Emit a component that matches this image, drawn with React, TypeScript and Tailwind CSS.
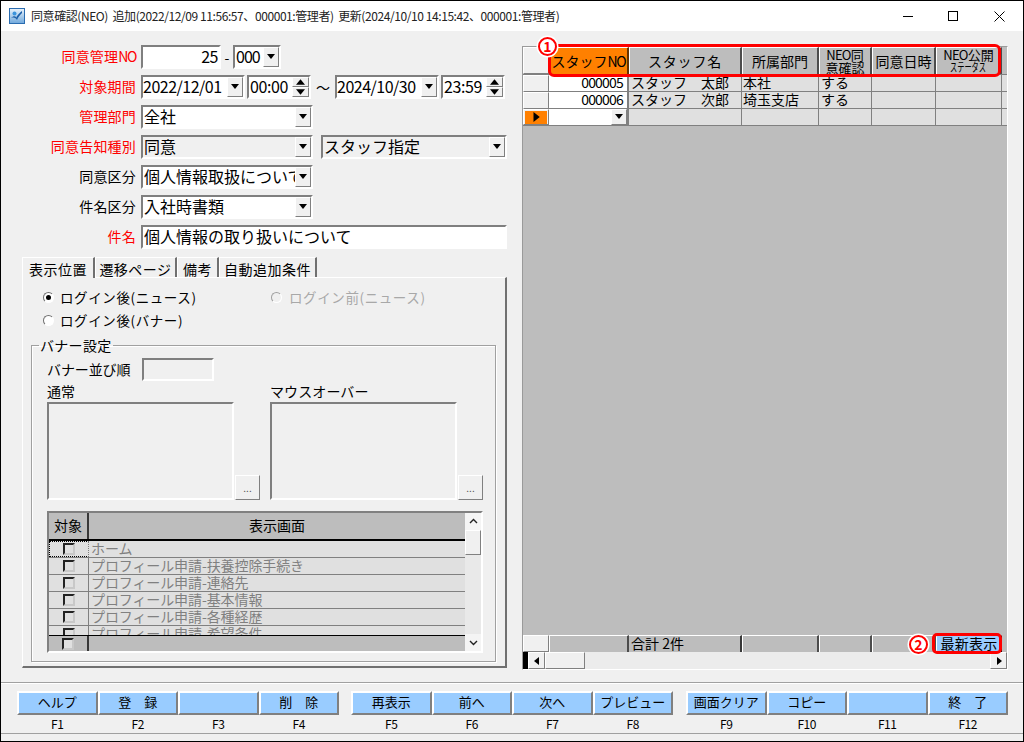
import React from "react";

const raised = "border border-t-white border-l-white border-r-[#808080] border-b-[#808080]";
const sunken = "border-2 border-t-[#7f7f7f] border-l-[#7f7f7f] border-r-white border-b-white";

function Arrow({ dir = "down", size = 8 }: { dir?: "down" | "up" | "left" | "right"; size?: number }) {
  const pts = { down: "0,1 8,1 4,6", up: "4,1 8,6 0,6", left: "6,0 6,8 1,4", right: "2,0 2,8 7,4" }[dir];
  return (
    <svg width={size} height={size} viewBox="0 0 8 8" className="block">
      <polygon points={pts} fill="#000" />
    </svg>
  );
}

function DropBtn({ w = "w-[16px]" }: { w?: string }) {
  return (
    <div className={`${w} shrink-0 h-full bg-[#f0f0f0] flex items-center justify-center ${raised}`}>
      <Arrow />
    </div>
  );
}

function Spin() {
  return (
    <div className="w-[17px] shrink-0 h-full flex flex-col">
      <div className={`h-1/2 bg-[#f0f0f0] flex items-center justify-center ${raised}`}>
        <Arrow dir="up" size={9} />
      </div>
      <div className={`h-1/2 bg-[#f0f0f0] flex items-center justify-center ${raised}`}>
        <Arrow dir="down" size={9} />
      </div>
    </div>
  );
}

function Label({ children, red }: { children: React.ReactNode; red?: boolean }) {
  return (
    <div className={`w-[114px] mr-[5px] text-right text-[14px] tracking-[0.2px] leading-[22px] h-[24px] whitespace-nowrap shrink-0 ${red ? "text-[#ff0000]" : "text-black"}`}>
      {children}
    </div>
  );
}

function Select({ text, w, bg = "bg-white" }: { text: string; w: string; bg?: string }) {
  return (
    <div className={`${w} h-[24px] ${bg} ${sunken} flex items-stretch shrink-0`}>
      <div className="flex-1 overflow-hidden whitespace-nowrap pl-[1px] text-[16px] leading-[18px]">{text}</div>
      <DropBtn />
    </div>
  );
}

function Row({ children, mb = "mb-[6px]" }: { children: React.ReactNode; mb?: string }) {
  return <div className={`flex items-center h-[24px] ${mb}`}>{children}</div>;
}

function Tab({ text, w, active }: { text: string; w: string; active?: boolean }) {
  return (
    <div
      className={`${w} h-[20px] shrink-0 text-center text-[14px] tracking-[0.5px] leading-[22px] whitespace-nowrap border-r-2 border-r-[#707070] border-t border-t-white ${
        active ? "border-l border-l-white h-[21px] -mb-px relative bg-[#f0f0f0]" : "mt-[1px] border-l border-l-white"
      }`}
    >
      {text}
    </div>
  );
}

function Radio({ checked, disabled }: { checked?: boolean; disabled?: boolean }) {
  return (
    <div className={`w-[11px] h-[11px] rounded-full border border-t-[#707070] border-l-[#707070] border-r-white border-b-white flex items-center justify-center shrink-0 ${disabled ? "bg-[#f0f0f0] border-t-[#a0a0a0] border-l-[#a0a0a0]" : "bg-white"}`}>
      {checked && <div className="w-[5px] h-[5px] rounded-full bg-black" />}
    </div>
  );
}

function Check() {
  return <div className="w-[12px] h-[12px] border-2 border-t-[#222] border-l-[#222] border-r-[#c8c8c8] border-b-[#c8c8c8] bg-[#e0e0e0]" />;
}

const listRows = [
  "ホーム",
  "プロフィール申請-扶養控除手続き",
  "プロフィール申請-連絡先",
  "プロフィール申請-基本情報",
  "プロフィール申請-各種経歴",
  "プロフィール申請-希望条件",
];

function ImageBox({ label, ml }: { label: string; ml?: string }) {
  return (
    <div className={`${ml ?? ""} w-[213px] shrink-0`}>
      <div className="h-[21px] text-[14px] leading-[20px] tracking-[0.1px]">{label}</div>
      <div className="flex items-end">
        <div className={`w-[187px] h-[98px] ${sunken}`} />
        <div className={`ml-[1px] w-[25px] h-[25px] bg-[#f0f0f0] ${raised} text-[10px] text-[#555] text-center leading-[24px]`}>...</div>
      </div>
    </div>
  );
}

const staffCols = "grid-cols-[26px_80px_113px_77px_53px_64px_66px_5px]";

function HeadCell({ children, active }: { children?: React.ReactNode; active?: boolean }) {
  return (
    <div className={`h-full overflow-hidden flex flex-col items-center justify-center text-center text-[14px] leading-[14px] pb-[1px] border-r-2 border-r-black/60 border-t border-t-white border-l border-l-white ${active ? "bg-[#ff8000]" : "bg-[#bdbdbd]"}`}>
      {children}
    </div>
  );
}

function DataRow({ no, name, dept, neo }: { no: string; name: string; dept: string; neo: string }) {
  return (
    <div className={`grid ${staffCols} h-[17px] text-[14px] leading-[15px] whitespace-nowrap`}>
      <div className={`bg-[#f0f0f0] ${raised} border-r-[#404040]`} />
      <div className="bg-white text-right pr-[4px] border-b border-b-[#808080] border-r-2 border-r-[#808080] tracking-[-0.8px]">{no}</div>
      <div className="bg-[#e0e0e0] pl-[2px] border-b border-b-[#808080] border-r border-r-[#808080] overflow-hidden">{name}</div>
      <div className="bg-[#e0e0e0] pl-[1px] border-b border-b-[#808080] border-r border-r-[#808080] overflow-hidden">{dept}</div>
      <div className="bg-[#e0e0e0] pl-[2px] border-b border-b-[#808080] border-r border-r-[#808080]">{neo}</div>
      <div className="bg-[#e0e0e0] border-b border-b-[#808080] border-r border-r-[#808080]" />
      <div className="bg-[#e0e0e0] border-b border-b-[#808080] border-r border-r-[#808080]" />
      <div className="bg-[#e0e0e0] border-b border-b-[#808080]" />
    </div>
  );
}

function FnBtn({ text, fn, w = "w-[80.5px]" }: { text: string; fn: string; w?: string }) {
  return (
    <div className={`${w} shrink-0`}>
      <div className={`h-[24px] bg-[#99ccff] border-2 border-t-white border-l-white border-r-[#808080] border-b-[#808080] text-center text-[13px] leading-[18px] whitespace-pre`}>
        {text}
      </div>
      <div className="h-[18px] text-center text-[12px] leading-[18px] tracking-[-0.4px]">{fn}</div>
    </div>
  );
}

function Circle({ n, className }: { n: string; className: string }) {
  return (
    <div className={`absolute w-[19px] h-[19px] rounded-full bg-white border-2 border-[#ff0000] shadow-[0_0_0_1.5px_white] text-[#ff0000] font-bold text-[14px] leading-[14px] text-center ${className}`}>
      {n}
    </div>
  );
}

export default function App() {
  return (
    <div className="relative w-[1024px] h-[742px] overflow-hidden bg-[#f0f0f0] border border-black text-black [font-family:'Noto_Sans_CJK_JP',sans-serif]">
      {/* title bar */}
      <div className="h-[30px] bg-white flex items-center">
        <svg width="16" height="16" viewBox="0 0 16 16" className="ml-[8px] shrink-0">
          <defs>
            <linearGradient id="ic" x1="0" y1="0" x2="0" y2="1">
              <stop offset="0" stopColor="#eaf3fb" />
              <stop offset="1" stopColor="#6fa8dc" />
            </linearGradient>
          </defs>
          <rect x="0.5" y="0.5" width="15" height="15" fill="url(#ic)" stroke="#2a6cb0" />
          <path d="M2 10c2-2 4-2 5-1l0 1c1-2 3-5 6-7l0 2c-2 2-4 4-5 7-1-2-3-3-6-2z" fill="#1a5ea8" />
          <circle cx="5.5" cy="5.5" r="2" fill="#3b94dc" />
        </svg>
        <div className="ml-[6px] text-[12px] text-[#222] whitespace-pre tracking-[-0.42px]">
          同意確認(NEO)  追加(2022/12/09 11:56:57、000001:管理者)  更新(2024/10/10 14:15:42、000001:管理者)
        </div>
        <div className="ml-auto flex items-center">
          <div className="w-[10px] h-px bg-black mr-[35px]" />
          <div className="w-[10px] h-[10px] border border-black mr-[36px]" />
          <svg width="11" height="11" viewBox="0 0 11 11" className="mr-[18px]">
            <path d="M0.5 0.5L10.5 10.5M10.5 0.5L0.5 10.5" stroke="#000" strokeWidth="1" />
          </svg>
        </div>
      </div>

      {/* main */}
      <div className="h-[651px] flex">
        <div className="w-[521px] shrink-0 pl-[21px] pt-[14px]">
          <Row>
            <Label red>同意管理<span className="tracking-[-1.4px]">NO</span></Label>
            <div className={`w-[80px] h-[24px] bg-white ${sunken} text-right pr-[1px] text-[16px] leading-[18px] tracking-[-0.5px]`}>25</div>
            <div className="w-[12px] text-center text-[14px]">-</div>
            <div className={`w-[48px] h-[24px] bg-white ${sunken} flex`}>
              <div className="flex-1 text-[16px] leading-[18px] tracking-[-1px] pl-[1px]">000</div>
              <DropBtn />
            </div>
          </Row>
          <Row>
            <Label red>対象期間</Label>
            <div className={`w-[104px] h-[24px] bg-white ${sunken} flex`}>
              <div className="flex-1 text-[16px] leading-[18px] tracking-[-0.5px] whitespace-nowrap overflow-hidden">2022/12/01</div>
              <DropBtn />
            </div>
            <div className={`ml-[2px] w-[64px] h-[24px] bg-white ${sunken} flex`}>
              <div className="flex-1 text-[16px] leading-[18px] tracking-[-0.4px] pl-[1px] whitespace-nowrap overflow-hidden">00:00</div>
              <Spin />
            </div>
            <div className="w-[24px] text-center text-[14px]">～</div>
            <div className={`w-[104px] h-[24px] bg-white ${sunken} flex`}>
              <div className="flex-1 text-[16px] leading-[18px] tracking-[-0.5px] whitespace-nowrap overflow-hidden">2024/10/30</div>
              <DropBtn />
            </div>
            <div className={`ml-[2px] w-[64px] h-[24px] bg-white ${sunken} flex`}>
              <div className="flex-1 text-[16px] leading-[18px] tracking-[-0.4px] pl-[1px] whitespace-nowrap overflow-hidden">23:59</div>
              <Spin />
            </div>
          </Row>
          <Row>
            <Label red>管理部門</Label>
            <Select text="全社" w="w-[172px]" />
          </Row>
          <Row>
            <Label red>同意告知種別</Label>
            <Select text="同意" w="w-[172px]" bg="bg-[#f0f0f0]" />
            <div className="w-[8px]" />
            <Select text="スタッフ指定" w="w-[186px]" bg="bg-[#f0f0f0]" />
          </Row>
          <Row>
            <Label>同意区分</Label>
            <Select text="個人情報取扱について" w="w-[172px]" />
          </Row>
          <Row>
            <Label>件名区分</Label>
            <Select text="入社時書類" w="w-[172px]" />
          </Row>
          <Row mb="mb-[8px]">
            <Label red>件名</Label>
            <div className={`w-[366px] h-[24px] bg-white ${sunken} pl-[1px] text-[16px] leading-[18px]`}>個人情報の取り扱いについて</div>
          </Row>

          {/* tabs */}
          <div className="flex items-end h-[20px] w-[485px]">
            <Tab text="表示位置" w="w-[73px]" active />
            <Tab text="遷移ページ" w="w-[82px]" />
            <Tab text="備考" w="w-[42px]" />
            <Tab text="自動追加条件" w="w-[98px]" />
          </div>
          <div className="w-[485px] h-[391px] border border-t-white border-l-white border-r-2 border-r-[#707070] border-b-2 border-b-[#707070] text-[13.5px]">
            <div className="h-[20px] mt-[9px] flex items-center pl-[20px]">
              <Radio checked />
              <div className="ml-[6px] w-[211px] tracking-[0.6px] text-[13.5px] whitespace-nowrap">ログイン後(ニュース)</div>
              <Radio disabled />
              <div className="ml-[7px] tracking-[0.6px] text-[#a8a8a8] whitespace-nowrap">ログイン前(ニュース)</div>
            </div>
            <div className="h-[20px] mt-[3px] flex items-center pl-[20px]">
              <Radio />
              <div className="ml-[6px] tracking-[0.6px] whitespace-nowrap">ログイン後(バナー)</div>
            </div>
            <fieldset className="mt-[7px] ml-[8px] w-[465px] h-[325px] border border-[#a0a0a0] shadow-[inset_1px_1px_0_white,1px_1px_0_white] pl-[15px]">
              <legend className="ml-[-8px] px-px text-[14px] leading-[16px] h-[16px] tracking-[0.3px]">バナー設定</legend>
              <div className="mt-[5px] flex items-center h-[23px]">
                <div className="w-[95px] text-[14px] tracking-[-0.1px]">バナー並び順</div>
                <div className={`w-[72px] h-[23px] ${sunken}`} />
              </div>
              <div className="flex">
                <ImageBox label="通常" />
                <ImageBox label="マウスオーバー" ml="ml-[10px]" />
              </div>
              {/* list */}
              <div className="mt-[11px] w-[436px] h-[142px] flex border-2 border-t-[#808080] border-l-[#808080] border-r-white border-b-white">
                <div className="w-[416px] shrink-0 flex flex-col">
                  <div className="h-[28px] grid grid-cols-[40px_376px] border-b-2 border-b-black text-[14px] leading-[24px] text-center">
                    <div className="bg-[#bdbdbd] border-r-2 border-r-black/70">対象</div>
                    <div className="bg-[#bdbdbd]">表示画面</div>
                  </div>
                  <div className="h-[94px] overflow-hidden">
                    {listRows.map((r, i) => (
                      <div key={r} className="h-[17px] grid grid-cols-[40px_376px] border-b border-b-[#808080] bg-[#e0e0e0] text-[14px] leading-[15px] text-[#808080] whitespace-nowrap">
                        <div className={`flex items-center justify-center border-r border-r-[#808080] ${i === 0 ? "border border-dotted border-black" : ""}`}>
                          <Check />
                        </div>
                        <div className="pl-[2px] tracking-[-0.1px] overflow-hidden">{r}</div>
                      </div>
                    ))}
                  </div>
                  <div className="h-[16px] grid grid-cols-[40px_376px] border-t border-t-black bg-[#bdbdbd]">
                    <div className="flex items-center justify-center border-r-2 border-r-black/70">
                      <Check />
                    </div>
                    <div />
                  </div>
                </div>
                <div className="w-[16px] flex flex-col bg-[#f4f4f4]">
                  <div className="h-[17px] flex items-center justify-center">
                    <svg width="9" height="7" viewBox="0 0 9 7"><path d="M1 5l3.5-3.5L8 5" fill="none" stroke="#222" strokeWidth="1.4" /></svg>
                  </div>
                  <div className={`h-[25px] bg-[#f0f0f0] ${raised}`} />
                  <div className="flex-1 bg-[#e9e9e9]" />
                  <div className="h-[17px] flex items-center justify-center">
                    <svg width="9" height="7" viewBox="0 0 9 7"><path d="M1 2l3.5 3.5L8 2" fill="none" stroke="#222" strokeWidth="1.4" /></svg>
                  </div>
                </div>
              </div>
            </fieldset>
          </div>
        </div>

        {/* right grid */}
        <div className="mt-[15px] w-[486px] h-[624px] shrink-0 flex flex-col border border-t-[#9a9a9a] border-l-[#9a9a9a] border-r-white border-b-white bg-[#bdbdbd]">
          <div className={`grid ${staffCols} h-[28px] border-b border-b-[#808080] whitespace-nowrap`}>
            <div className={`bg-[#f0f0f0] ${raised}`} />
            <HeadCell active><span>スタッフ<span className="tracking-[-1.2px]">NO</span></span></HeadCell>
            <HeadCell><span className="tracking-[0.8px]">スタッフ名</span></HeadCell>
            <HeadCell>所属部門</HeadCell>
            <HeadCell>
              <span className="text-[13px] leading-[13px]"><span className="tracking-[-0.8px]">NEO</span>同</span>
              <span className="text-[13px] leading-[13px]">意確認</span>
            </HeadCell>
            <HeadCell>同意日時</HeadCell>
            <HeadCell>
              <span className="text-[13px] leading-[13px]"><span className="tracking-[-0.8px]">NEO</span>公開</span>
              <span className="inline-block text-[12px] leading-[12px] scale-x-[0.6]">ステータス</span>
            </HeadCell>
            <div className="bg-[#bdbdbd]" />
          </div>
          <DataRow no="000005" name="スタッフ　太郎" dept="本社" neo="する" />
          <DataRow no="000006" name="スタッフ　次郎" dept="埼玉支店" neo="する" />
          <div className={`grid ${staffCols} h-[17px] border-b border-b-[#808080]`}>
            <div className={`bg-[#f0f0f0] ${raised} border-r-[#404040] flex items-center justify-center`}>
              <div className="w-[22px] h-[13px] bg-[#ff8000] flex items-center justify-center">
                <Arrow dir="right" size={10} />
              </div>
            </div>
            <div className="bg-white flex justify-end border-r-2 border-r-[#808080]">
              <DropBtn />
            </div>
            <div className="bg-[#e0e0e0] border-r border-r-[#808080]" />
            <div className="bg-[#e0e0e0] border-r border-r-[#808080]" />
            <div className="bg-[#e0e0e0] border-r border-r-[#808080]" />
            <div className="bg-[#e0e0e0] border-r border-r-[#808080]" />
            <div className="bg-[#e0e0e0] border-r border-r-[#808080]" />
            <div className="bg-[#e0e0e0]" />
          </div>
          <div className="flex-1" />
          <div className={`grid ${staffCols} h-[17px] text-[14px] leading-[15px] whitespace-pre`}>
            <div className={`bg-[#f0f0f0] ${raised}`} />
            <HeadCell />
            <div className="border-t border-t-white border-r-2 border-r-black/70 pl-[2px]">合計 2件</div>
            <HeadCell />
            <HeadCell />
            <HeadCell />
            <div className="bg-[#99ccff] text-center tracking-[0.2px] border border-t-white border-l-white whitespace-nowrap">最新表示</div>
            <div className="bg-[#bdbdbd]" />
          </div>
          <div className="h-[17px] flex bg-[#f4f4f4]">
            <div className="w-[5px] bg-black" />
            <div className={`w-[17px] bg-[#f0f0f0] ${raised} flex items-center justify-center`}>
              <Arrow dir="left" />
            </div>
            <div className={`w-[40px] bg-[#f0f0f0] ${raised}`} />
            <div className="flex-1 bg-[#ececec]" />
            <div className={`w-[17px] bg-[#f0f0f0] ${raised} flex items-center justify-center`}>
              <Arrow dir="right" />
            </div>
          </div>
        </div>
      </div>

      {/* bottom bar */}
      <div className="h-[52px] border-t border-t-[#a0a0a0] border-b border-b-[#a0a0a0] pt-[8px] pl-[16px] flex shadow-[inset_0_1px_0_white]">
        <FnBtn text="ヘルプ" fn="F1" />
        <FnBtn text="登　録" fn="F2" />
        <FnBtn text="" fn="F3" />
        <FnBtn text="削　除" fn="F4" />
        <div className="w-[12px]" />
        <FnBtn text="再表示" fn="F5" />
        <FnBtn text="前へ" fn="F6" />
        <FnBtn text="次へ" fn="F7" />
        <FnBtn text="プレビュー" fn="F8" />
        <div className="w-[13px]" />
        <FnBtn text="画面クリア" fn="F9" />
        <FnBtn text="コピー" fn="F10" />
        <FnBtn text="" fn="F11" />
        <FnBtn text="終　了" fn="F12" />
      </div>

      {/* annotations */}
      <div className="absolute left-[547px] top-[43px] w-[453px] h-[33px] rounded-[6px] border-[3px] border-[#ff0000]" />
      <Circle n="1" className="left-[537px] top-[36px]" />
      <div className="absolute left-[931px] top-[632px] w-[70px] h-[21px] rounded-[5px] border-[3px] border-[#ff0000]" />
      <Circle n="2" className="left-[908px] top-[634px]" />
    </div>
  );
}
